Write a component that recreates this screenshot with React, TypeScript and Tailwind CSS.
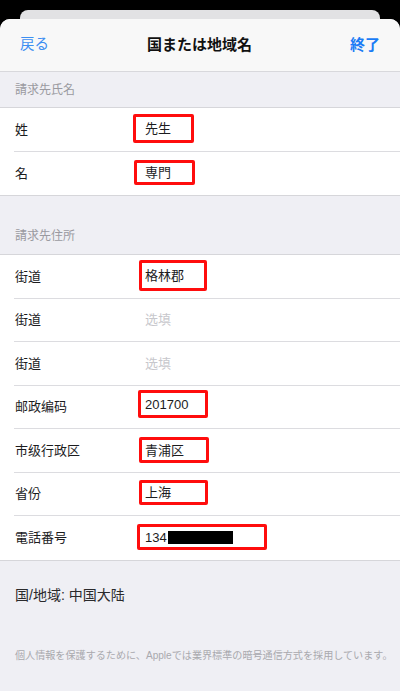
import React from 'react';

type Row = {
    label: string;
    value?: string;
    placeholder?: string;
    masked?: boolean;
    box?: string;
};

const nameRows: Row[] = [
    { label: '姓', value: '先生', box: 'ml-[1px] w-[61px] h-[29px] pl-[9px] mb-[1px]' },
    { label: '名', value: '専門', box: 'ml-[2px] w-[61px] h-[25px] pl-[8px] mb-[2px]' },
];

const addressRows: Row[] = [
    { label: '街道', value: '格林郡', box: 'ml-[7px] w-[68px] h-[31px] pl-[3px] mb-[1px]' },
    { label: '街道', placeholder: '选填' },
    { label: '街道', placeholder: '选填' },
    { label: '邮政编码', value: '201700', box: 'ml-[6px] w-[70px] h-[28px] pl-[4px] mb-[5px]' },
    { label: '市级行政区', value: '青浦区', box: 'ml-[7px] w-[70px] h-[26px] pl-[3px]' },
    { label: '省份', value: '上海', box: 'ml-[7px] w-[69px] h-[25px] pl-[3px] mb-[3px]' },
    { label: '電話番号', value: '134', masked: true, box: 'ml-[5px] w-[130px] h-[26px] pl-[5px] mb-[1px]' },
];

function FormRow({ row, last }: { row: Row; last: boolean }) {
    return (
        <div
            className={`ml-[14px] h-[43.5px] flex items-center ${last ? '' : 'border-b border-[#dcdce0]'}`}
        >
            <span className="w-[118px] pl-[1px] text-[13px] text-[#1c1c1e]">{row.label}</span>
            {row.placeholder && (
                <span className="ml-[13px] text-[13px] text-[#c7c7cc]">{row.placeholder}</span>
            )}
            {row.box && (
                <span
                    className={`flex items-center border-[3px] border-[#ff0d0d] rounded-[2px] text-[13px] text-[#1c1c1e] ${row.box}`}
                >
                    {row.value}
                    {row.masked && <span className="ml-[1px] w-[65px] h-[13px] bg-black" />}
                </span>
            )}
        </div>
    );
}

function Section({ title, rows, top }: { title: string; rows: Row[]; top: string }) {
    return (
        <div>
            <div className={`flex items-center pl-[15px] text-[12px] text-[#9a9aa0] ${top}`}>{title}</div>
            <div className="bg-white border-y border-[#d6d6da]">
                {rows.map((row, i) => (
                    <FormRow key={i} row={row} last={i === rows.length - 1} />
                ))}
            </div>
        </div>
    );
}

export default function App() {
    return (
        <div className="h-[691px] overflow-hidden bg-black pt-[10px] font-['Liberation_Sans','Noto_Sans_CJK_JP',sans-serif]">
            {/* card behind the sheet */}
            <div className="mx-[20px] h-[9px] rounded-t-[8px] bg-[#e2e2e4]" />

            <div className="h-[700px] rounded-t-[10px] overflow-hidden bg-[#efeff4]">
                {/* Nav bar */}
                <div className="h-[53px] flex items-center justify-between px-[20px] bg-[#f8f8f8] border-b border-[#d8d8dc]">
                    <span className="text-[14.5px] text-[#3d8ff2]">戻る</span>
                    <span className="text-[15px] font-bold text-[#111]">国または地域名</span>
                    <span className="text-[15px] font-bold text-[#1a7cf5]">終了</span>
                </div>

                <Section title="請求先氏名" rows={nameRows} top="h-[35px]" />
                <Section title="請求先住所" rows={addressRows} top="h-[58px] pt-[22px]" />

                <div className="pl-[15px] pt-[24px] text-[14px] leading-[20px] text-[#2a2a2c]">国/地域: 中国大陆</div>

                <div className="mt-[44px] pl-[15px] text-[10.1px] leading-[14px] text-[#a9a9ae] whitespace-nowrap">
                    個人情報を保護するために、Appleでは業界標準の暗号通信方式を採用しています。
                </div>
            </div>
        </div>
    );
}
